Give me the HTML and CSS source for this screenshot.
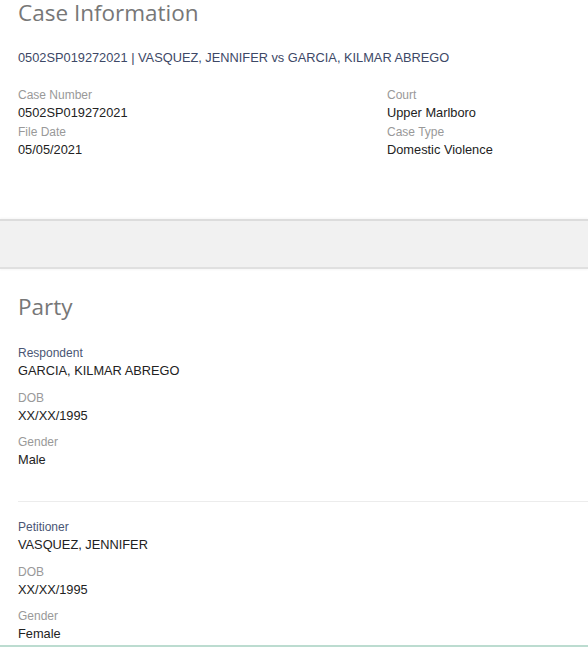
FILE: index.html
```html
<!DOCTYPE html>
<html>
<head>
    <meta charset="UTF-8">
    <title>Case Information</title>
    <link rel="stylesheet" href="styles.css">
</head>
<body>
    <div class="panel case-panel">
        <h2 class="panel-title">Case Information</h2>
        <div class="case-line">0502SP019272021 | VASQUEZ, JENNIFER vs GARCIA, KILMAR ABREGO</div>

        <div class="case-grid">
            <div class="col">
                <div class="label">Case Number</div>
                <div class="value">0502SP019272021</div>
                <div class="label">File Date</div>
                <div class="value">05/05/2021</div>
            </div>
            <div class="col">
                <div class="label">Court</div>
                <div class="value">Upper Marlboro</div>
                <div class="label">Case Type</div>
                <div class="value">Domestic Violence</div>
            </div>
        </div>
    </div>

    <div class="spacer"></div>

    <div class="panel party-panel">
        <h2 class="panel-title">Party</h2>

        <div class="party">
            <div class="field">
                <div class="role">Respondent</div>
                <div class="value">GARCIA, KILMAR ABREGO</div>
            </div>
            <div class="field">
                <div class="label">DOB</div>
                <div class="value">XX/XX/1995</div>
            </div>
            <div class="field">
                <div class="label">Gender</div>
                <div class="value">Male</div>
            </div>
        </div>

        <div class="party">
            <div class="field">
                <div class="role">Petitioner</div>
                <div class="value">VASQUEZ, JENNIFER</div>
            </div>
            <div class="field">
                <div class="label">DOB</div>
                <div class="value">XX/XX/1995</div>
            </div>
            <div class="field">
                <div class="label">Gender</div>
                <div class="value">Female</div>
            </div>
        </div>
    </div>
</body>
</html>
```

FILE: styles.css
```css
body {
    margin: 0;
    font-family: "Liberation Sans", Arial, sans-serif;
    background-color: #fff;
    color: #222;
}

.panel {
    padding: 0 0 0 18px;
}

.panel-title {
    font-family: "Open Sans", "Noto Sans", sans-serif;
    font-weight: normal;
    font-size: 22.5px;
    line-height: 26px;
    color: #777;
    margin: 0;
}

.case-panel {
    height: 219px;
}

.case-line {
    font-size: 12.8px;
    line-height: 18px;
    color: #3d4866;
    margin-top: 23px;
}

.case-grid {
    display: grid;
    grid-template-columns: 369px 1fr;
    margin-top: 19px;
}

.label {
    font-size: 12px;
    line-height: 18px;
    color: #999;
}

.value {
    font-size: 12.8px;
    line-height: 18.5px;
    color: #222;
}

.spacer {
    height: 46px;
    background-color: #f1f1f1;
    border-top: 2px solid #dcdcdc;
    border-bottom: 2px solid #e0e0e0;
    box-shadow: 0 -1px 2px rgba(0, 0, 0, 0.04), 0 1px 2px rgba(0, 0, 0, 0.04);
}

.party-panel {
    padding-top: 25px;
    border-bottom: 2px solid #bcdcd0;
    height: 351px;
}

.party {
    padding-top: 24px;
    padding-bottom: 32px;
}

.party + .party {
    border-top: 1px solid #ececec;
    padding-top: 16px;
    padding-bottom: 0;
}

.field + .field {
    margin-top: 8.5px;
}

.field .value {
    line-height: 18px;
}

.role {
    font-size: 12px;
    line-height: 18px;
    color: #4a5674;
}
```
